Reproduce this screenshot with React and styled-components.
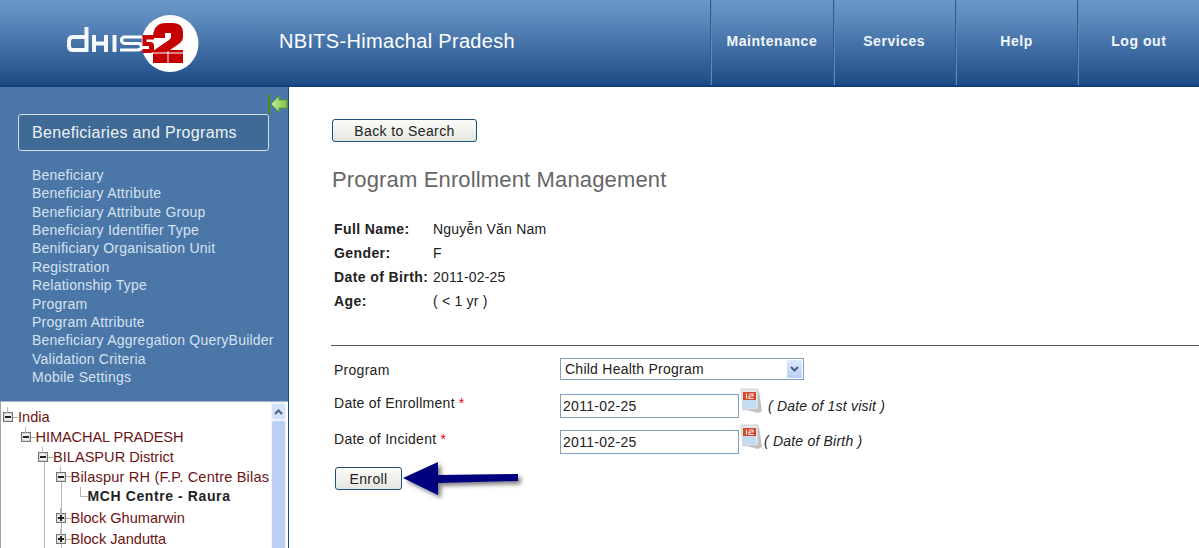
import { Fragment } from "react";
import styled, { createGlobalStyle } from "styled-components";

const GlobalStyle = createGlobalStyle`
  html, body {
    margin: 0;
    height: 100%;
    overflow: hidden;
    background: #fff;
    font-family: "Liberation Sans", Arial, sans-serif;
  }
`;

const Page = styled.div`
  display: flex;
  flex-direction: column;
  height: 548px;
  overflow: hidden;
`;

const Header = styled.header`
  display: flex;
  align-items: stretch;
  height: 85px;
  flex-shrink: 0;
  background: linear-gradient(#6a98ca, #5a88bb 25%, #1d4b85);
  border-bottom: 2px solid #123f75;
`;

const LogoSlot = styled.div`
  display: flex;
  align-items: flex-start;
  width: 219px;
  padding: 13px 0 0 60px;
`;

const SiteTitle = styled.div`
  flex: 1;
  align-self: center;
  font-size: 20px;
  letter-spacing: 0.32px;
  color: #fff;
  margin-top: -3px;
`;

const Nav = styled.nav`
  display: flex;
  margin-right: -0.5px;
`;

const NavItem = styled.div`
  display: flex;
  align-items: center;
  justify-content: center;
  box-sizing: border-box;
  width: 122.33px;
  padding-bottom: 4px;
  font-size: 14px;
  font-weight: 700;
  letter-spacing: 0.55px;
  color: #f2f6fa;
  border-left: 1px solid #2f5d93;
  box-shadow: inset 1px 0 0 #6089b6;
`;

const Body = styled.div`
  display: flex;
  flex: 1;
  min-height: 0;
`;

const Sidebar = styled.aside`
  position: relative;
  display: flex;
  flex-direction: column;
  box-sizing: border-box;
  width: 289px;
  flex-shrink: 0;
  padding-top: 27px;
  background: #4a76a8;
  border-right: 1px solid #1d4b85;
`;

const Collapse = styled.svg`
  position: absolute;
  top: 7px;
  right: 0;
`;

const SectionBox = styled.div`
  box-sizing: border-box;
  width: 251px;
  height: 37px;
  margin-left: 18px;
  padding-left: 13px;
  line-height: 35px;
  font-size: 16px;
  letter-spacing: 0.32px;
  color: #eef2f6;
  background: #3e6a95;
  border: 1px solid #d8dfe6;
  border-radius: 3px;
`;

const Menu = styled.ul`
  list-style: none;
  margin: 15px 0 0;
  padding: 0 0 0 32px;
`;

const MenuItem = styled.li`
  height: 18.36px;
  line-height: 18.36px;
  font-size: 14px;
  letter-spacing: 0.23px;
  white-space: nowrap;
  color: #d6e2ef;
`;

const TreePanel = styled.div`
  display: flex;
  flex: 1;
  min-height: 0;
  margin-top: 15px;
  padding-right: 2px;
  background: #fff;
  border-top: 1px solid #9fb5cc;
  border-left: 1px solid #9aa5b0;
  overflow: hidden;
`;

const Tree = styled.div`
  flex: 1;
  min-width: 0;
  padding-top: 5px;
  overflow: hidden;
`;

const TreeRow = styled.div`
  position: relative;
  display: flex;
  align-items: center;
  height: ${(p) => p.$height || 20}px;
  padding-left: ${(p) => p.$depth * 17.5 + 2}px;
  font-size: 14.6px;
  letter-spacing: ${(p) => p.$spacing || 0}px;
  white-space: nowrap;
  color: #6b1414;
`;

const Guide = styled.span`
  position: absolute;
  top: ${(p) => p.$top || 0};
  bottom: 0;
  left: ${(p) => p.$left}px;
  border-left: 1px solid #b5b5b5;
`;

const Toggle = styled.span`
  position: relative;
  display: flex;
  align-items: center;
  justify-content: center;
  box-sizing: border-box;
  width: 10px;
  height: 10px;
  flex-shrink: 0;
  background: #f2f2f2;
  border: 1px solid #777;
  box-shadow: inset 0 0 0 1px #d8d8d8;

  &::before {
    content: "";
    width: 6px;
    height: 2px;
    background: #222;
  }

  &::after {
    content: "";
    display: ${(p) => (p.$open ? "none" : "block")};
    position: absolute;
    left: 3px;
    top: 1px;
    width: 2px;
    height: 6px;
    background: #222;
  }
`;

const Tail = styled.span`
  position: relative;
  width: 5px;
  flex-shrink: 0;
  border-top: 1px solid #a8a8a8;

  &::before {
    content: "";
    position: absolute;
    left: -6px;
    top: -11px;
    height: 6px;
    border-left: 1px solid #bbb;
  }
`;

const Elbow = styled.span`
  flex-shrink: 0;
  width: 7px;
  height: 9px;
  margin: -9px 0 0 24px;
  border-left: 1px solid #b5b5b5;
  border-bottom: 1px solid #b5b5b5;
`;

const Selected = styled.b`
  margin-top: -2px;
  font-size: 14px;
  color: #222;
  letter-spacing: 0.6px;
`;

const Scrollbar = styled.div`
  display: flex;
  flex-direction: column;
  gap: 2px;
  width: 15px;
  flex-shrink: 0;
  padding: 2px 1px 0;
  box-sizing: border-box;
  background: #eef3fb;
`;

const ScrollUp = styled.div`
  display: flex;
  align-items: center;
  justify-content: center;
  height: 15px;
  background: #d5e1f7;
  border-radius: 2px;
`;

const ScrollThumb = styled.div`
  flex: 1;
  background: #bcd0f6;
  border-radius: 2px 2px 0 0;
`;

const Main = styled.main`
  flex: 1;
  min-width: 0;
  padding: 32px 0 0 43px;
  color: #222;
  font-size: 14px;
`;

const Button = styled.button`
  display: block;
  box-sizing: border-box;
  width: ${(p) => p.$width}px;
  height: 23px;
  padding: 0;
  font-family: inherit;
  font-size: 14px;
  letter-spacing: 0.4px;
  color: #222;
  background: linear-gradient(#fbfbf8, #e6e6e0);
  border: 1px solid #1c4f7c;
  border-radius: 3px;
`;

const Heading = styled.h1`
  margin: 25px 0 0;
  font-size: 22px;
  line-height: 26px;
  font-weight: 400;
  letter-spacing: 0.15px;
  color: #666;
`;

const Info = styled.dl`
  display: grid;
  grid-template-columns: 99px 1fr;
  grid-auto-rows: 24px;
  align-items: center;
  margin: 24px 0 0 2px;
`;

const InfoLabel = styled.dt`
  font-weight: 700;
  letter-spacing: 0.4px;
  color: #222;
`;

const InfoValue = styled.dd`
  margin: 0;
  letter-spacing: 0.2px;
`;

const Divider = styled.hr`
  height: 1px;
  margin: 32px 0 0 -1px;
  padding: 0;
  border: 0;
  background: #555;
`;

const Form = styled.div`
  display: flex;
  flex-direction: column;
  padding: 12px 0 0 2px;
`;

const Row = styled.div`
  display: flex;
  align-items: flex-start;
  height: ${(p) => p.$height}px;
`;

const Label = styled.div`
  width: 226px;
  flex-shrink: 0;
  line-height: ${(p) => p.$line}px;
  letter-spacing: 0.27px;
`;

const Required = styled.span`
  color: #e00;
  margin-left: 4px;
`;

const SelectBox = styled.div`
  display: flex;
  align-items: center;
  justify-content: space-between;
  box-sizing: border-box;
  width: 244px;
  height: 22px;
  padding: 0 1px 0 4px;
  letter-spacing: 0.25px;
  background: #fff;
  border: 1px solid #7d9fc0;
`;

const SelectArrow = styled.div`
  display: flex;
  align-items: center;
  justify-content: center;
  width: 15px;
  height: 18px;
  background: linear-gradient(#dfe8fb, #b9cdf5);
  border-radius: 1px;
`;

const DateInput = styled.div`
  box-sizing: border-box;
  width: 179px;
  height: 24px;
  padding-left: 2px;
  line-height: 23px;
  letter-spacing: 0.3px;
  background: #fff;
  border: 1px solid #7d9fc0;
`;

const CalendarIcon = styled.svg`
  flex-shrink: 0;
  margin-left: 1px;
  margin-top: -6px;
`;

const Hint = styled.i`
  margin: ${(p) => p.$top}px 0 0 ${(p) => p.$gap}px;
  line-height: 18px;
  letter-spacing: 0.2px;
`;

const EnrollRow = styled.div`
  position: relative;
  margin: 1px 0 0 1px;
`;

const EnrollArrow = styled.svg`
  position: absolute;
  left: 68px;
  top: -6px;
  overflow: visible;
`;

const MENU = [
  "Beneficiary",
  "Beneficiary Attribute",
  "Beneficiary Attribute Group",
  "Beneficiary Identifier Type",
  "Benificiary Organisation Unit",
  "Registration",
  "Relationship Type",
  "Program",
  "Program Attribute",
  "Beneficiary Aggregation QueryBuilder",
  "Validation Criteria",
  "Mobile Settings",
];

const INFO = [
  ["Full Name:", "Nguyễn Văn Nam"],
  ["Gender:", "F"],
  ["Date of Birth:", "2011-02-25"],
  ["Age:", "( < 1 yr )"],
];

function Logo() {
  return (
    <svg width="145" height="62" viewBox="0 0 145 62">
      <circle cx="110" cy="30.5" r="28.5" fill="#fff" />
      <g fill="none" stroke="#fff" strokeWidth="4" opacity="0.95">
        <path d="M26.5 14V37H13Q9 37 9 33V28Q9 24 13 24H26.5" />
        <path d="M34 22V39M34 30.5H46M46 22V39" />
        <path d="M54.5 22V39" />
      </g>
      <path
        d="M82 24H65Q61.5 24 61.5 27T65 30.5H78Q81.5 30.5 81.5 33.5T78 37H60"
        fill="none"
        stroke="#fff"
        strokeWidth="3"
      />
      <path
        d="M82.5 22H94V26.5H86.5V29H90Q94 29 94 33V36Q94 40 90 40H82.5V36H89V33H82.5Z"
        fill="#c40000"
      />
      <path
        d="M93 23Q94 10 106 10H113Q123 10 123 20V24Q123 28 118 31.5L110 37H123V50H93V38L109 27Q111 25.5 111 24V20H105V25H93Z"
        fill="#c40000"
      />
      <path d="M108 38V50M93 40H123" stroke="#fff" strokeWidth="1" />
    </svg>
  );
}

function Calendar() {
  return (
    <CalendarIcon width="23" height="26" viewBox="0 0 23 26">
      <path d="M3 21L19 3L22 23L18 25Z" fill="#8a8f94" opacity="0.55" />
      <path d="M1 1H18V21L3 22Z" fill="#e4e7ea" stroke="#c4c9ce" strokeWidth="0.8" />
      <path d="M3 4H16V12H3Z" fill="#d5452e" />
      <path d="M3 12H16V20L3 21Z" fill="#c4dcf1" />
      <path
        d="M6.5 5.5V10.5M9 6H13V8H9V10.5H13.5"
        stroke="#f8efe6"
        strokeWidth="1.2"
        fill="none"
      />
    </CalendarIcon>
  );
}

export default function App() {
  return (
    <Page>
      <GlobalStyle />
      <Header>
        <LogoSlot>
          <Logo />
        </LogoSlot>
        <SiteTitle>NBITS-Himachal Pradesh</SiteTitle>
        <Nav>
          <NavItem>Maintenance</NavItem>
          <NavItem>Services</NavItem>
          <NavItem>Help</NavItem>
          <NavItem>Log out</NavItem>
        </Nav>
      </Header>
      <Body>
        <Sidebar>
          <Collapse width="20" height="20" viewBox="0 0 20 20">
            <defs>
              <linearGradient id="collapseFill" x1="0" y1="0" x2="1" y2="0">
                <stop offset="0" stopColor="#c8ec9a" />
                <stop offset="1" stopColor="#80c044" />
              </linearGradient>
            </defs>
            <rect x="0" y="0" width="2" height="20" fill="#4c8a1c" />
            <path
              d="M3 10l8-8v4h8v8h-8v4z"
              fill="url(#collapseFill)"
              stroke="#5f9e2a"
              strokeWidth="1"
            />
          </Collapse>
          <SectionBox>Beneficiaries and Programs</SectionBox>
          <Menu>
            {MENU.map((item) => (
              <MenuItem key={item}>{item}</MenuItem>
            ))}
          </Menu>
          <TreePanel>
            <Tree>
              <TreeRow $depth={0}>
                <Toggle $open />
                <Tail />
                India
              </TreeRow>
              <TreeRow $depth={1} $spacing={-0.1}>
                <Toggle $open />
                <Tail />
                HIMACHAL PRADESH
              </TreeRow>
              <TreeRow $depth={2}>
                <Guide $left={43} $top="60%" />
                <Toggle $open />
                <Tail />
                BILASPUR District
              </TreeRow>
              <TreeRow $depth={3} $height={19} $spacing={0.17}>
                <Guide $left={43} />
                <Guide $left={60} $top="60%" />
                <Toggle $open />
                <Tail />
                Bilaspur RH (F.P. Centre Bilas
              </TreeRow>
              <TreeRow $depth={3} $height={21}>
                <Guide $left={43} />
                <Guide $left={60} />
                <Elbow />
                <Selected>MCH Centre - Raura</Selected>
              </TreeRow>
              <TreeRow $depth={3} $height={22}>
                <Guide $left={43} />
                <Guide $left={60} />
                <Toggle />
                <Tail />
                Block Ghumarwin
              </TreeRow>
              <TreeRow $depth={3} $height={20}>
                <Guide $left={43} />
                <Guide $left={60} />
                <Toggle />
                <Tail />
                Block Jandutta
              </TreeRow>
            </Tree>
            <Scrollbar>
              <ScrollUp>
                <svg width="9" height="6" viewBox="0 0 9 6">
                  <path d="M1 5l3.5-3.5L8 5" fill="none" stroke="#4d6185" strokeWidth="2" />
                </svg>
              </ScrollUp>
              <ScrollThumb />
            </Scrollbar>
          </TreePanel>
        </Sidebar>
        <Main>
          <Button $width={145}>Back to Search</Button>
          <Heading>Program Enrollment Management</Heading>
          <Info>
            {INFO.map(([label, value]) => (
              <Fragment key={label}>
                <InfoLabel>{label}</InfoLabel>
                <InfoValue>{value}</InfoValue>
              </Fragment>
            ))}
          </Info>
          <Divider />
          <Form>
            <Row $height={36}>
              <Label $line={24}>Program</Label>
              <SelectBox>
                Child Health Program
                <SelectArrow>
                  <svg width="9" height="6" viewBox="0 0 9 6">
                    <path d="M1 1l3.5 3.5L8 1" fill="none" stroke="#4d6185" strokeWidth="2" />
                  </svg>
                </SelectArrow>
              </SelectBox>
            </Row>
            <Row $height={36}>
              <Label $line={18}>
                Date of Enrollment<Required>*</Required>
              </Label>
              <DateInput>2011-02-25</DateInput>
              <Calendar />
              <Hint $gap={5} $top={3}>( Date of 1st visit )</Hint>
            </Row>
            <Row $height={36}>
              <Label $line={18}>
                Date of Incident<Required>*</Required>
              </Label>
              <DateInput>2011-02-25</DateInput>
              <Calendar />
              <Hint $gap={1} $top={2}>( Date of Birth )</Hint>
            </Row>
            <EnrollRow>
              <Button $width={67}>Enroll</Button>
              <EnrollArrow width="118" height="38" viewBox="0 0 118 38">
                <defs>
                  <filter id="arrowShadow" x="-10%" y="-20%" width="125%" height="150%">
                    <feDropShadow dx="3" dy="3" stdDeviation="2" floodColor="#000" floodOpacity="0.5" />
                  </filter>
                </defs>
                <path
                  d="M0 17L35 1V14L115 13V20L35 22V34z"
                  fill="#00007f"
                  filter="url(#arrowShadow)"
                />
              </EnrollArrow>
            </EnrollRow>
          </Form>
        </Main>
      </Body>
    </Page>
  );
}
